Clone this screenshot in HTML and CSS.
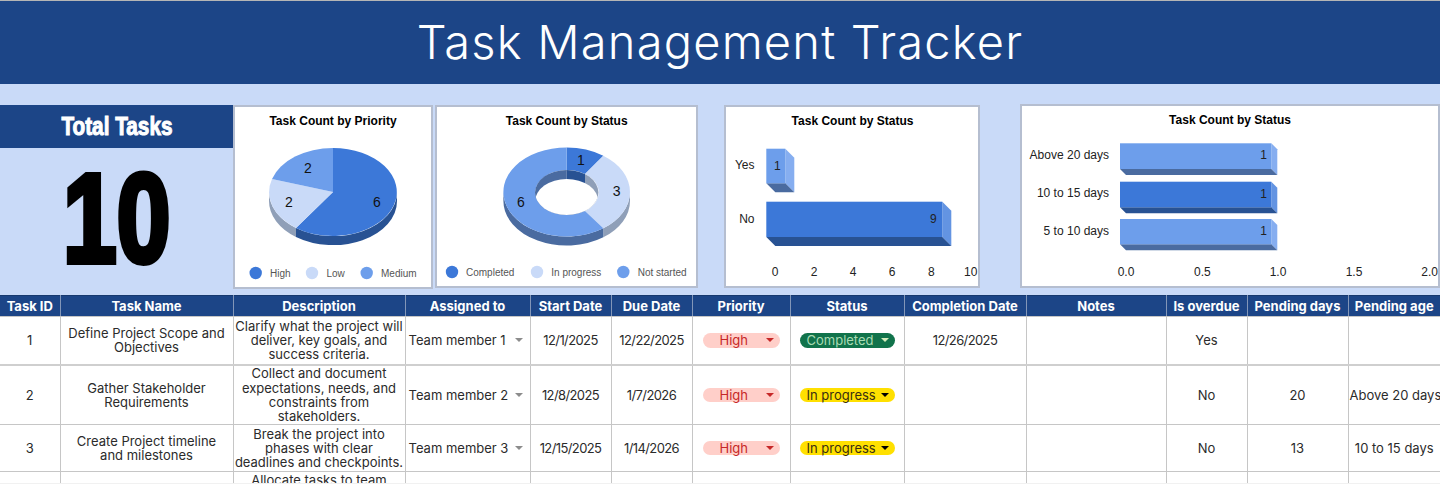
FILE: index.html
```html
<!DOCTYPE html>
<html lang="en">
<head>
<meta charset="utf-8">
<title>Task Management Tracker</title>
<link rel="stylesheet" href="styles.css">
</head>
<body>
<div class="page">
  <header class="banner"><h1>Task Management Tracker</h1></header>
  <section class="dash">
    <div class="total">
      <div class="total-head"><span class="total-label">Total Tasks</span></div>
      <div class="total-value"><span class="total-num">10</span></div>
    </div>

    <div class="chart c1">
      <svg viewBox="235 107 196 180">
        <text class="title" x="333" y="125">Task Count by Priority</text>
        <path class="s-blue" d="M397 192V201A64 44 0 0 1 296 237V228A64 44 0 0 0 397 192Z"/>
        <path class="s-grey" d="M269 192V201A64 44 0 0 0 296 237V228A64 44 0 0 1 269 192Z"/>
        <path class="f-blue" d="M333 192V148A64 44 0 1 1 296 228Z"/>
        <path class="f-light" d="M333 192L296 228A64 44 0 0 1 272 179Z"/>
        <path class="f-mid" d="M333 192L272 179A64 44 0 0 1 333 148Z"/>
        <text class="val" x="377" y="207">6</text>
        <text class="val" x="289" y="207">2</text>
        <text class="val" x="308" y="173">2</text>
        <circle class="f-blue" cx="255.7" cy="273" r="6.2"/><text class="leg" x="270" y="276.5">High</text>
        <circle class="f-light" cx="312" cy="273" r="6.2"/><text class="leg" x="326.5" y="276.5">Low</text>
        <circle class="f-mid" cx="366.7" cy="273" r="6.2"/><text class="leg" x="381" y="276.5">Medium</text>
      </svg>
    </div>

    <div class="chart c2">
      <svg viewBox="437 107 259 179">
        <defs><clipPath id="hole"><ellipse cx="566.7" cy="192.5" rx="31.7" ry="22.5"/></clipPath></defs>
        <text class="title" x="566.7" y="125">Task Count by Status</text>
        <path class="s-grey" d="M630 192V201A63.3 44.5 0 0 1 603.3 237.3V228.3A63.3 44.5 0 0 0 630 192Z"/>
        <path class="s-mid" d="M503.4 192V201A63.3 44.5 0 0 0 603.3 237.3V228.3A63.3 44.5 0 0 1 503.4 192Z"/>
        <path class="f-blue" d="M566.7 147.5A63.3 44.5 0 0 1 603.3 155.7L585 174A31.7 22.5 0 0 0 566.7 170Z"/>
        <path class="f-light" d="M603.3 155.7A63.3 44.5 0 0 1 603.3 228.3L585 211A31.7 22.5 0 0 0 585 174Z"/>
        <path class="f-mid" d="M603.3 228.3A63.3 44.5 0 1 1 566.7 147.5V170A31.7 22.5 0 1 0 585 211Z"/>
        <g clip-path="url(#hole)">
          <rect class="s-mid" x="530" y="165" width="36.7" height="55"/>
          <rect class="s-blue" x="566.7" y="165" width="18.3" height="55"/>
          <rect class="s-grey" x="585" y="165" width="20" height="55"/>
          <ellipse class="f-white" cx="566.7" cy="201.5" rx="31.7" ry="22.5"/>
        </g>
        <text class="val" x="581" y="165">1</text>
        <text class="val" x="616.7" y="196">3</text>
        <text class="val" x="521" y="207">6</text>
        <circle class="f-blue" cx="452" cy="272" r="6.2"/><text class="leg" x="466" y="275.5">Completed</text>
        <circle class="f-light" cx="537" cy="272" r="6.2"/><text class="leg" x="551.3" y="275.5">In progress</text>
        <circle class="f-mid" cx="623.3" cy="272" r="6.2"/><text class="leg" x="637.7" y="275.5">Not started</text>
      </svg>
    </div>

    <div class="chart c3">
      <svg viewBox="726 107 252 179">
        <text class="title" x="852.5" y="125">Task Count by Status</text>
        <path class="e-mid" d="M785.3 148.7L794.3 157.7V192.3L785.3 183.3Z"/>
        <path class="s-mid" d="M766.3 183.3H785.3L794.3 192.3H775.3Z"/>
        <rect class="f-mid" x="766.3" y="148.7" width="19" height="34.6"/>
        <path class="e-blue" d="M942.3 201.7L951.3 210.7V246L942.3 237Z"/>
        <path class="s-blue" d="M766.3 237H942.3L951.3 246H775.3Z"/>
        <rect class="f-blue" x="766.3" y="201.7" width="176" height="35.3"/>
        <text class="cat" x="754.5" y="169">Yes</text>
        <text class="cat" x="754.5" y="223">No</text>
        <text class="num" x="777.3" y="170">1</text>
        <text class="num" x="933.3" y="223">9</text>
        <text class="num" x="775" y="276">0</text>
        <text class="num" x="814" y="276">2</text>
        <text class="num" x="853" y="276">4</text>
        <text class="num" x="892" y="276">6</text>
        <text class="num" x="931.3" y="276">8</text>
        <text class="num" x="970.7" y="276">10</text>
      </svg>
    </div>

    <div class="chart c4">
      <svg viewBox="1022 106 416 180">
        <text class="title" x="1230" y="124">Task Count by Status</text>
        <path class="e-mid" d="M1271.3 143.3L1277.3 149.3V175L1271.3 169Z"/>
        <path class="s-mid" d="M1120 169H1271.3L1277.3 175H1126Z"/>
        <rect class="f-mid" x="1120" y="143.3" width="151.3" height="25.7"/>
        <path class="e-blue" d="M1271.3 181.7L1277.3 187.7V213.3L1271.3 207.3Z"/>
        <path class="s-blue" d="M1120 207.3H1271.3L1277.3 213.3H1126Z"/>
        <rect class="f-blue" x="1120" y="181.7" width="151.3" height="25.6"/>
        <path class="e-mid" d="M1271.3 219L1277.3 225V250.3L1271.3 244.3Z"/>
        <path class="s-mid" d="M1120 244.3H1271.3L1277.3 250.3H1126Z"/>
        <rect class="f-mid" x="1120" y="219" width="151.3" height="25.3"/>
        <text class="cat" x="1109" y="159">Above 20 days</text>
        <text class="cat" x="1109" y="197">10 to 15 days</text>
        <text class="cat" x="1109" y="235">5 to 10 days</text>
        <text class="num" x="1263.7" y="159">1</text>
        <text class="num" x="1263.7" y="198">1</text>
        <text class="num" x="1263.7" y="235">1</text>
        <text class="num" x="1126" y="276">0.0</text>
        <text class="num" x="1202.3" y="276">0.5</text>
        <text class="num" x="1278" y="276">1.0</text>
        <text class="num" x="1354" y="276">1.5</text>
        <text class="num" x="1429.7" y="276">2.0</text>
      </svg>
    </div>
  </section>

  <table class="tasks">
    <colgroup>
      <col class="w-id"><col class="w-name"><col class="w-desc"><col class="w-who"><col class="w-start"><col class="w-due">
      <col class="w-pri"><col class="w-stat"><col class="w-comp"><col class="w-notes"><col class="w-over"><col class="w-days"><col class="w-age">
    </colgroup>
    <thead>
      <tr>
        <th>Task ID</th><th>Task Name</th><th>Description</th><th>Assigned to</th><th>Start Date</th><th>Due Date</th>
        <th>Priority</th><th>Status</th><th>Completion Date</th><th>Notes</th><th>Is overdue</th><th>Pending days</th><th>Pending age</th>
      </tr>
    </thead>
    <tbody>
      <tr class="r1">
        <td>1</td><td>Define Project Scope and<br>Objectives</td>
        <td>Clarify what the project will<br>deliver, key goals, and<br>success criteria.</td>
        <td><div class="who"><span>Team member 1</span><i class="caret grey"></i></div></td>
        <td class="date">12/1/2025</td><td class="date">12/22/2025</td>
        <td><div class="pill high"><span>High</span><i class="caret red"></i></div></td>
        <td><div class="pill done"><span>Completed</span><i class="caret pale"></i></div></td>
        <td class="date">12/26/2025</td><td></td><td>Yes</td><td></td><td></td>
      </tr>
      <tr class="r2">
        <td>2</td><td>Gather Stakeholder<br>Requirements</td>
        <td>Collect and document<br>expectations, needs, and<br>constraints from<br>stakeholders.</td>
        <td><div class="who"><span>Team member 2</span><i class="caret grey"></i></div></td>
        <td class="date">12/8/2025</td><td class="date">1/7/2026</td>
        <td><div class="pill high"><span>High</span><i class="caret red"></i></div></td>
        <td><div class="pill prog"><span>In progress</span><i class="caret black"></i></div></td>
        <td></td><td></td><td>No</td><td>20</td><td>Above 20 days</td>
      </tr>
      <tr class="r3">
        <td>3</td><td>Create Project timeline<br>and milestones</td>
        <td>Break the project into<br>phases with clear<br>deadlines and checkpoints.</td>
        <td><div class="who"><span>Team member 3</span><i class="caret grey"></i></div></td>
        <td class="date">12/15/2025</td><td class="date">1/14/2026</td>
        <td><div class="pill high"><span>High</span><i class="caret red"></i></div></td>
        <td><div class="pill prog"><span>In progress</span><i class="caret black"></i></div></td>
        <td></td><td></td><td>No</td><td>13</td><td>10 to 15 days</td>
      </tr>
      <tr class="r4">
        <td></td><td></td>
        <td>Allocate tasks to team<br>members based on<br>skills and<br>availability.</td>
        <td></td><td></td><td></td><td></td><td></td><td></td><td></td><td></td><td></td><td></td>
      </tr>
    </tbody>
  </table>
</div>
</body>
</html>
```

FILE: styles.css
```css
* { box-sizing: border-box; }
html, body { margin: 0; padding: 0; }
body { background: #fff; font-family: "Inter", "Liberation Sans", sans-serif; }

.page {
  position: relative;
  width: 1440px;
  height: 484px;
  overflow: hidden;
  background: #c9daf8;
}
.page::after {
  content: "";
  position: absolute;
  left: 0; right: 0; bottom: 0;
  height: 1px;
  background: #f1f1f1;
}

.banner {
  height: 84px;
  padding-bottom: 2px;
  background: #1c4587;
  border-top: 1px solid #b5b5b5;
  display: flex;
  align-items: center;
  justify-content: center;
}
.banner h1 {
  margin: 0;
  color: #fff;
  font-family: "Inter", sans-serif;
  font-weight: 300;
  font-size: 47px;
  line-height: 54px;
  letter-spacing: 1.2px;
}

.dash {
  margin-top: 20px;
  height: 191px;
  display: flex;
  align-items: flex-start;
}
.total { width: 233px; height: 190px; margin-top: 1px; flex: none; }
.total-head {
  height: 43px;
  background: #1c4587;
  display: flex;
  align-items: center;
  justify-content: center;
}
.total-label {
  display: block;
  color: #fff;
  font-family: "Liberation Sans", sans-serif;
  font-weight: 700;
  font-size: 25px;
  -webkit-text-stroke: 1px #fff;
  transform: scaleX(.83);
}
.total-value {
  height: 147px;
  display: flex;
  align-items: center;
  justify-content: center;
}
.total-num {
  display: block;
  color: #000;
  font-family: "Liberation Sans", sans-serif;
  font-weight: 700;
  font-size: 127px;
  line-height: 1;
  -webkit-text-stroke: 6px #000;
  transform: scaleX(.76);
  margin-top: -6px;
}

.chart {
  flex: none;
  background: #fff;
  border: 2px solid #b5bed0;
}
.chart svg { display: block; width: 100%; height: 100%; overflow: visible; }
.c1 { width: 200px; height: 184px; margin-top: 1px; }
.c2 { width: 263px; height: 183px; margin-top: 1px; margin-left: 2px; }
.c3 { width: 256px; height: 183px; margin-top: 1px; margin-left: 26px; }
.c4 { width: 420px; height: 184px; margin-left: 40px; }

svg text { font-family: "Liberation Sans", Arial, sans-serif; }
.title { font-size: 12px; font-weight: 700; text-anchor: middle; fill: #000; }
.val { font-size: 14px; text-anchor: middle; fill: #111; }
.leg { font-size: 10px; fill: #555; }
.cat { font-size: 12px; text-anchor: end; fill: #222; }
.num { font-size: 12px; text-anchor: middle; fill: #222; }

.f-blue { fill: #3c78d8; }
.f-light { fill: #c9daf8; }
.f-mid { fill: #6d9eeb; }
.f-white { fill: #fff; }
.s-blue { fill: #285293; }
.s-grey { fill: #8f9fb8; }
.s-mid { fill: #4a6ba0; }
.e-blue { fill: #6394e2; }
.e-mid { fill: #86aef0; }

.tasks {
  width: 1440px;
  table-layout: fixed;
  border-collapse: collapse;
  background: #fff;
  color: #2b2b2b;
  font-size: 13px;
  line-height: 14.2px;
}
.w-id { width: 60px; }
.w-name { width: 173px; }
.w-desc { width: 172px; }
.w-who { width: 125px; }
.w-start { width: 81px; }
.w-due { width: 81px; }
.w-pri { width: 98px; }
.w-stat { width: 114px; }
.w-comp { width: 122px; }
.w-notes { width: 140px; }
.w-over { width: 81px; }
.w-days { width: 101px; }
.w-age { width: 92px; }

.tasks th {
  height: 21px;
  padding: 0;
  background: #1c4587;
  color: #fff;
  font-size: 13px;
  font-weight: 700;
  white-space: nowrap;
  border: 1px solid #8296b8;
  border-top: 1px solid #17396f;
  border-bottom: 1px solid #c6c6c6;
}
.tasks th:first-child, .tasks td:first-child { border-left: 0; }
.tasks th:last-child, .tasks td:last-child { border-right: 0; }
.tasks td {
  padding: 0 1px;
  text-align: center;
  vertical-align: middle;
  border: 1px solid #c6c6c6;
  white-space: nowrap;
}
.tasks td.date { letter-spacing: -.6px; }
.r1 { height: 48px; }
.r1 td { border-bottom: 2px solid #cfcfcf; }
.r2 { height: 60px; }
.r3 { height: 47px; }
.r4 { height: 60px; }

.who {
  display: flex;
  align-items: center;
  justify-content: space-between;
  padding: 0 6px 0 2px;
  text-align: left;
}
.pill {
  height: 14.5px;
  margin: 0 8px;
  padding: 0 6px 0 7px;
  border-radius: 8px;
  display: flex;
  align-items: center;
  justify-content: space-between;
  line-height: 14px;
}
.high { background: #ffcfc9; color: #c62828; margin: 0 9px; padding-left: 17px; }
.done { background: #11734b; color: #a9dcb4; }
.prog { background: #ffe000; color: #3a2f10; }

.caret {
  display: block;
  width: 0;
  height: 0;
  flex: none;
  border-left: 4px solid transparent;
  border-right: 4px solid transparent;
  border-top: 4px solid #888;
}
.caret.grey { border-top-color: #8c8c8c; }
.caret.red { border-top-color: #c62828; }
.caret.pale { border-top-color: #d4edbc; }
.caret.black { border-top-color: #000; }
```
